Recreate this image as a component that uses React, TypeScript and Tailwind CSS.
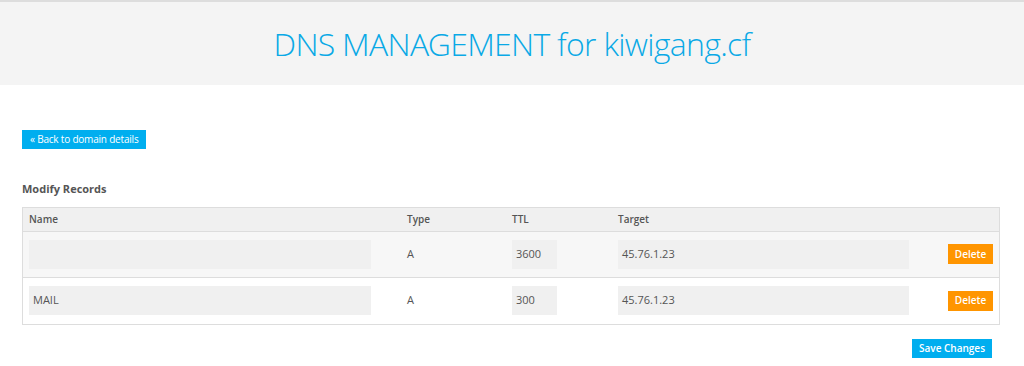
import React from "react";

const rows = [
    {name: "", type: "A", ttl: "3600", target: "45.76.1.23"},
    {name: "MAIL", type: "A", ttl: "300", target: "45.76.1.23"},
];

const cols = "grid grid-cols-[378px_105px_106px_305px_1fr]";

export default function App() {
    return (
        <div className="min-h-[366px] bg-white text-[#555] font-['Open_Sans',sans-serif]">
            <div className="border-t-2 border-[#dddddd] bg-[#f4f4f4] h-[85px] flex items-center justify-center">
                <h1 className="text-[32px] font-light font-['Open_Sans_Light','Open_Sans',sans-serif] text-[#0aa9e6] tracking-[-0.7px]">
                    DNS MANAGEMENT for kiwigang.cf
                </h1>
            </div>

            <div className="pl-[22px] pr-[24px]">
                <button className="mt-[45px] h-[19px] px-[8px] bg-[#00aeef] text-white text-[10px] tracking-[-0.2px] leading-[19px]">
                    « Back to domain details
                </button>

                <p className="mt-[32px] text-[11px] font-bold text-[#555]">Modify Records</p>

                <div className="mt-[9px] border border-[#dddddd]">
                    <div className={`${cols} h-[24px] items-center bg-[#f0f0f0] border-b border-[#dddddd] text-[10px] font-semibold text-[#555]`}>
                        <div className="pl-[6px]">Name</div>
                        <div className="pl-[6px]">Type</div>
                        <div className="pl-[6px]">TTL</div>
                        <div className="pl-[6px]">Target</div>
                        <div></div>
                    </div>
                    {rows.map((r, i) => (
                        <div
                            key={i}
                            className={`${cols} h-[46px] items-center text-[11px] ${i === 0 ? "bg-[#f7f7f7] border-b border-[#dddddd]" : "bg-white"}`}
                        >
                            <div className="pl-[6px]">
                                <div className="h-[29px] w-[342px] bg-[#f0f0f0] flex items-center pl-[4px]">{r.name}</div>
                            </div>
                            <div className="pl-[6px]">{r.type}</div>
                            <div className="pl-[6px]">
                                <div className="h-[29px] w-[45px] bg-[#f0f0f0] flex items-center pl-[4px]">{r.ttl}</div>
                            </div>
                            <div className="pl-[6px]">
                                <div className="h-[29px] w-[291px] bg-[#f0f0f0] flex items-center pl-[4px]">{r.target}</div>
                            </div>
                            <div className="flex justify-end pr-[6px]">
                                <button className="h-[20px] w-[45px] bg-[#ff9500] text-white text-[10px] font-semibold">Delete</button>
                            </div>
                        </div>
                    ))}
                </div>

                <div className="flex justify-end pr-[8px] mt-[14px]">
                    <button className="h-[19px] px-[7px] bg-[#00aeef] text-white text-[10px] font-semibold leading-[19px]">Save Changes</button>
                </div>
            </div>
        </div>
    );
}
